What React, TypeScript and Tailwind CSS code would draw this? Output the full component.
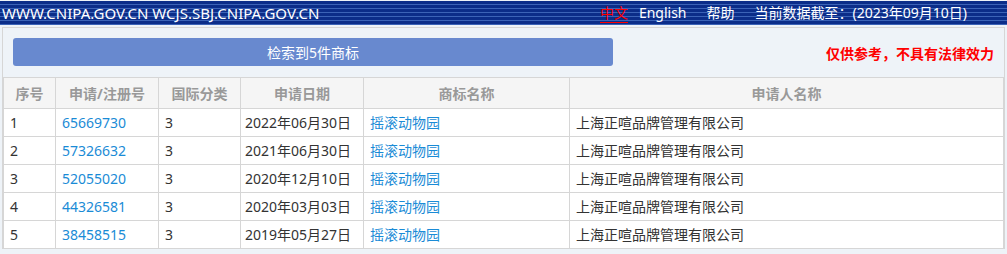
const rows = [
  { no: "1", reg: "65669730", cls: "3", date: "2022年06月30日" },
  { no: "2", reg: "57326632", cls: "3", date: "2021年06月30日" },
  { no: "3", reg: "52055020", cls: "3", date: "2020年12月10日" },
  { no: "4", reg: "44326581", cls: "3", date: "2020年03月03日" },
  { no: "5", reg: "38458515", cls: "3", date: "2019年05月27日" },
]

export default function App() {
  return (
    <div className="w-[1007px] h-[254px] overflow-hidden bg-[#eef3f8] font-['Noto_Sans','Noto_Sans_CJK_SC',sans-serif] text-[14px]">
      <div className="mt-[1px] h-[24px] flex items-center text-white bg-[repeating-linear-gradient(180deg,#0b2d89_0px,#0b2d89_3px,#3b63b7_3px,#3b63b7_4px)]">
        <span className="pl-[2px] text-[15px] leading-none">WWW.CNIPA.GOV.CN WCJS.SBJ.CNIPA.GOV.CN</span>
        <div className="ml-auto mr-[40px] flex items-center gap-[20px] leading-[18px]">
          <span className="text-[#ff0000] border-b border-[#ff0000]">中文</span>
          <span className="-ml-[9px]">English</span>
          <span>帮助</span>
          <span>当前数据截至：(2023年09月10日)</span>
        </div>
      </div>

      <div className="mt-[2px] mx-[2px] border-x border-t border-[#d6d6d6] bg-[#eef3f8] pt-[10px]">
        <div className="flex items-center">
          <div className="ml-[10px] w-[600px] h-[28px] rounded-[3px] bg-[#6889cf] text-white flex items-center justify-center">
            检索到5件商标
          </div>
          <span className="ml-auto mr-[10px] mt-[3px] text-[#ff0000] font-bold">仅供参考，不具有法律效力</span>
        </div>

        <table className="mt-[11px] w-full table-fixed border-collapse bg-white text-[#333333]">
          <colgroup>
            <col className="w-[52px]" />
            <col className="w-[103px]" />
            <col className="w-[82px]" />
            <col className="w-[123px]" />
            <col className="w-[206px]" />
            <col />
          </colgroup>
          <thead>
            <tr className="h-[31px] bg-[#f5f5f5] text-[#999999] font-bold">
              <th className="border border-[#d6d6d6] font-bold">序号</th>
              <th className="border border-[#d6d6d6] font-bold">申请/注册号</th>
              <th className="border border-[#d6d6d6] font-bold">国际分类</th>
              <th className="border border-[#d6d6d6] font-bold">申请日期</th>
              <th className="border border-[#d6d6d6] font-bold">商标名称</th>
              <th className="border border-[#d6d6d6] font-bold">申请人名称</th>
            </tr>
          </thead>
          <tbody>
            {rows.map((r) => (
              <tr key={r.no} className="h-[28px]">
                <td className="border border-[#d6d6d6] px-[6px]">{r.no}</td>
                <td className="border border-[#d6d6d6] px-[6px] text-[#1a8bd6]">{r.reg}</td>
                <td className="border border-[#d6d6d6] px-[6px]">{r.cls}</td>
                <td className="border border-[#d6d6d6] px-[4px]">{r.date}</td>
                <td className="border border-[#d6d6d6] px-[6px] text-[#1a8bd6]">摇滚动物园</td>
                <td className="border border-[#d6d6d6] px-[6px]">上海正喧品牌管理有限公司</td>
              </tr>
            ))}
          </tbody>
        </table>
      </div>
    </div>
  )
}
